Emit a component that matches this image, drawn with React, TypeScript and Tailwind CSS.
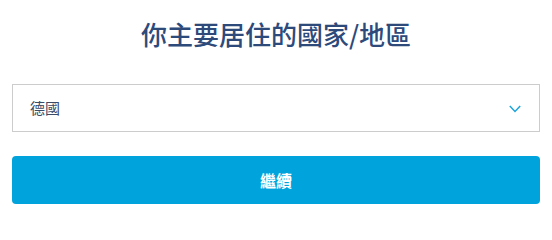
export default function App() {
  return (
    <div className="w-[552px] h-[218px] bg-white px-3 pt-[17px]" style={{ fontFamily: '"Noto Sans CJK TC", "Noto Sans", sans-serif' }}>
      <h1 className="text-center text-[26px] leading-[34px] font-medium text-[#2d4a7b]">你主要居住的國家/地區</h1>
      <div className="mt-[33px] h-[48px] border border-[#cccccc] flex items-center justify-between pl-[17px] pr-[18px]">
        <span className="text-[15px] text-[#3b4a66]">德國</span>
        <svg width="12" height="8" viewBox="0 0 12 8" fill="none" className="mt-[1px]">
          <polyline points="0.8,1 6,6.4 11.2,1" stroke="#1aa3dc" strokeWidth="1.5" />
        </svg>
      </div>
      <button className="mt-[24px] w-full h-[48px] rounded-[4px] bg-[#00a3dc] text-white text-[16px] font-bold">繼續</button>
    </div>
  );
}
